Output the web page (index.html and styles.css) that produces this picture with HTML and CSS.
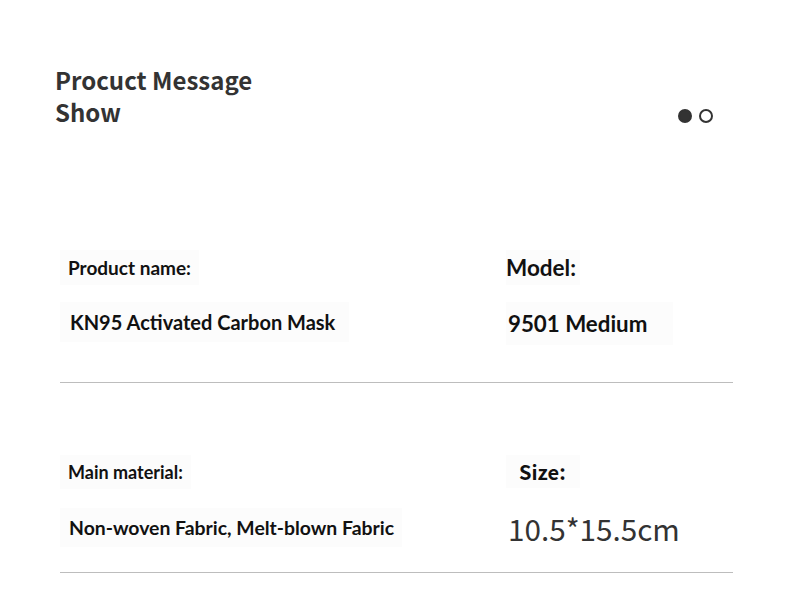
FILE: index.html
```html
<!DOCTYPE html>
<html lang="en">
  <head>
    <meta charset="UTF-8" />
    <meta name="viewport" content="width=device-width, initial-scale=1.0" />
    <title>Procuct Message Show</title>
    <link rel="stylesheet" href="styles.css">
  </head>
  <body>
    <header class="top">
      <h1>Procuct Message<br>Show</h1>
      <div class="dots">
        <span class="dot active"></span>
        <span class="dot"></span>
      </div>
    </header>

    <section class="specs">
      <div class="row row-first">
        <div class="cell">
          <p class="label name-label">Product name:</p>
          <p class="value name-value">KN95 Activated Carbon Mask</p>
        </div>
        <div class="cell cell-right">
          <p class="label model-label">Model:</p>
          <p class="value model-value">9501 Medium</p>
        </div>
      </div>

      <div class="row row-second">
        <div class="cell">
          <p class="label material-label">Main material:</p>
          <p class="value material-value">Non-woven Fabric, Melt-blown Fabric</p>
        </div>
        <div class="cell cell-right">
          <p class="label size-label">Size:</p>
          <p class="value size-value">10.5*15.5cm</p>
        </div>
      </div>
    </section>
  </body>
</html>
```

FILE: styles.css
```css
body {
  margin: 0;
  padding: 0;
  background-color: #fff;
  font-family: Lato, "Liberation Sans", sans-serif;
  color: #111;
}
p {
  margin: 0;
}
.top {
  display: flex;
  justify-content: space-between;
  align-items: flex-end;
  padding: 64px 77px 0 55px;
}
.top h1 {
  margin: 0;
  font-family: "Noto Sans CJK SC", sans-serif;
  font-weight: 700;
  font-size: 24px;
  line-height: 32px;
  color: #333;
}
.dots {
  display: flex;
  gap: 7px;
  margin-bottom: 5px;
}
.dot {
  width: 10px;
  height: 10px;
  border: 2px solid #333;
  border-radius: 50%;
  background-color: #fff;
}
.dot.active {
  background-color: #333;
}
.specs {
  margin: 0 57px 0 60px;
}
.row {
  display: grid;
  grid-template-columns: 446px 1fr;
  border-bottom: 1px solid #bdbdbd;
}
.row-first {
  padding-top: 122px;
  padding-bottom: 37px;
}
.row-second {
  padding-top: 72px;
  padding-bottom: 22px;
}
.cell {
  display: flex;
  flex-direction: column;
  align-items: flex-start;
}
.label, .value {
  background-color: #fcfcfc;
  font-weight: 700;
}
.label {
  padding: 6px 8px 6px 8px;
  font-size: 19px;
}
.value {
  margin-top: 17px;
  padding: 8px 14px 8px 10px;
  font-size: 20px;
}
.model-label {
  padding: 4px 4px 4px 0;
  font-size: 22.5px;
}
.model-value {
  font-size: 22.3px;
  padding: 8px 26px 8px 2px;
}
.material-label {
  font-size: 18px;
}
.row-second .value {
  margin-top: 19px;
}
.material-value {
  padding: 8px 8px 8px 9px;
  font-size: 19.4px;
}
.size-label {
  font-family: "Noto Sans CJK SC", sans-serif;
  font-size: 20px;
  padding: 2px 14px 2px 13px;
}
.size-value {
  background-color: transparent;
  font-family: "Noto Sans CJK SC", sans-serif;
  font-weight: 400;
  font-size: 29.7px;
  color: #333;
  padding: 0 4px 0 2px;
}
```
